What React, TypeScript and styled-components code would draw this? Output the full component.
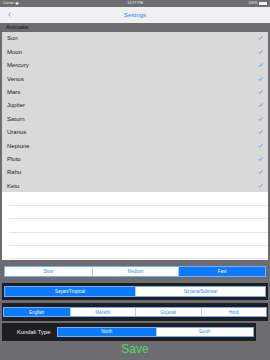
import styled, { createGlobalStyle } from "styled-components";

const planets = [
  "Sun",
  "Moon",
  "Mercury",
  "Venus",
  "Mars",
  "Jupiter",
  "Saturn",
  "Uranus",
  "Neptune",
  "Pluto",
  "Rahu",
  "Ketu",
];

const GlobalStyle = createGlobalStyle`
  html, body {
    margin: 0;
    padding: 0;
    background: #6d6d71;
  }
  body {
    font-family: "Liberation Sans", Arial, sans-serif;
  }
`;

const Screen = styled.div`
  width: 270px;
  height: 360px;
  display: flex;
  flex-direction: column;
  background: #6d6d71;
  overflow: hidden;
`;

const StatusBar = styled.div`
  height: 7px;
  display: grid;
  grid-template-columns: 1fr auto 1fr;
  align-items: center;
  padding: 0 3px;
  color: #f4f4f4;
  font-size: 3.6px;
  line-height: 7px;
`;

const StatusLeft = styled.span`
  display: flex;
  align-items: center;
  gap: 1px;
`;

const StatusRight = styled.span`
  display: flex;
  justify-content: flex-end;
  align-items: center;
  gap: 1.5px;
`;

const Battery = styled.span`
  width: 8px;
  height: 2.6px;
  background: #f4f4f4;
  border-radius: 0.5px;
`;

const NavBar = styled.div`
  height: 15.5px;
  background: #f0f0f4;
  display: grid;
  grid-template-columns: 30px 1fr 30px;
  align-items: center;
`;

const BackButton = styled.span`
  padding-left: 8px;
  display: flex;
  align-items: center;
`;

const NavTitle = styled.span`
  text-align: center;
  color: #2b82f6;
  font-size: 6.2px;
`;

const SectionHeader = styled.div`
  height: 9.2px;
  line-height: 9.2px;
  padding-left: 6px;
  font-size: 6px;
  color: #111111;
`;

const Table = styled.div`
  margin: 0 2px;
  height: 228.3px;
  background: #ffffff;
  display: flex;
  flex-direction: column;
`;

const Row = styled.div`
  height: 13.4px;
  flex-shrink: 0;
  display: flex;
  align-items: center;
  justify-content: space-between;
  padding: 0 5px;
  background: #d9d9d9;
  font-size: 6px;
  color: #1a1a1a;
`;

const EmptyRow = styled.div`
  height: 13.4px;
  flex-shrink: 0;
  margin-left: 7px;
  border-bottom: 1px solid #e6e6e9;
  box-sizing: border-box;
`;

const Segmented = styled.div<{ $cols: number }>`
  display: grid;
  grid-template-columns: repeat(${(p) => p.$cols}, 1fr);
  height: 10.4px;
  border: 1px solid #78aef4;
  box-sizing: border-box;
  background: #ffffff;
  flex: 1;
`;

const Segment = styled.div<{ $active?: boolean }>`
  display: flex;
  align-items: center;
  justify-content: center;
  font-size: 4.5px;
  color: ${(p) => (p.$active ? "#ffffff" : "#3a8cf6")};
  background: ${(p) => (p.$active ? "#0a7bff" : "#ffffff")};
  & + & {
    border-left: 1px solid #b3d1f8;
  }
`;

const SpeedRow = styled.div`
  display: flex;
  margin: 6.4px 4px 0 4px;
`;

const Panel = styled.div<{ $right?: number; $top: number; $side?: number }>`
  display: flex;
  align-items: center;
  gap: 4px;
  margin: ${(p) => p.$top}px ${(p) => p.$right ?? 2}px 0 2px;
  padding: 3.5px ${(p) => p.$side ?? 2}px;
  background: #1f1f21;
`;

const PanelLabel = styled.span`
  color: #f2f2f2;
  font-size: 5.8px;
  padding-left: 13px;
  width: 36px;
  white-space: nowrap;
`;

const SaveButton = styled.div`
  flex: 1;
  display: flex;
  align-items: center;
  justify-content: center;
  color: #4cd964;
  font-size: 12px;
  padding-bottom: 2px;
`;

function Check() {
  return (
    <svg width="5" height="4" viewBox="0 0 12 10">
      <path
        d="M1.5 5.5 L4.5 8.5 L10.5 1.5"
        fill="none"
        stroke="#3d8df2"
        strokeWidth="1.7"
        strokeLinecap="round"
        strokeLinejoin="round"
      />
    </svg>
  );
}

export default function App() {
  return (
    <>
      <GlobalStyle />
      <Screen>
        <StatusBar>
          <StatusLeft>
            Carrier
            <svg width="4" height="3" viewBox="0 0 8 6">
              <path d="M0 2 Q4 -1 8 2 L4 6 Z" fill="#f4f4f4" />
            </svg>
          </StatusLeft>
          <span>12:27 PM</span>
          <StatusRight>
            100%
            <Battery />
          </StatusRight>
        </StatusBar>
        <NavBar>
          <BackButton>
            <svg width="3" height="5" viewBox="0 0 6 10">
              <path
                d="M5 1 L1 5 L5 9"
                fill="none"
                stroke="#2b82f6"
                strokeWidth="1.3"
              />
            </svg>
          </BackButton>
          <NavTitle>Settings</NavTitle>
          <span />
        </NavBar>
        <SectionHeader>Animate:</SectionHeader>
        <Table>
          {planets.map((p) => (
            <Row key={p}>
              <span>{p}</span>
              <Check />
            </Row>
          ))}
          {[0, 1, 2, 3, 4].map((i) => (
            <EmptyRow key={i} />
          ))}
        </Table>
        <SpeedRow>
          <Segmented $cols={3}>
            <Segment>Slow</Segment>
            <Segment>Medium</Segment>
            <Segment $active>Fast</Segment>
          </Segmented>
        </SpeedRow>
        <Panel $top={6}>
          <Segmented $cols={2}>
            <Segment $active>Sayan/Tropical</Segment>
            <Segment>Niryana/Sidereal</Segment>
          </Segmented>
        </Panel>
        <Panel $top={3.3} $side={1}>
          <Segmented $cols={4}>
            <Segment $active>English</Segment>
            <Segment>Marathi</Segment>
            <Segment>Gujarati</Segment>
            <Segment>Hindi</Segment>
          </Segmented>
        </Panel>
        <Panel $top={2.3} $right={14}>
          <PanelLabel>Kundali Type</PanelLabel>
          <Segmented $cols={2}>
            <Segment $active>North</Segment>
            <Segment>South</Segment>
          </Segmented>
        </Panel>
        <SaveButton>Save</SaveButton>
      </Screen>
    </>
  );
}
